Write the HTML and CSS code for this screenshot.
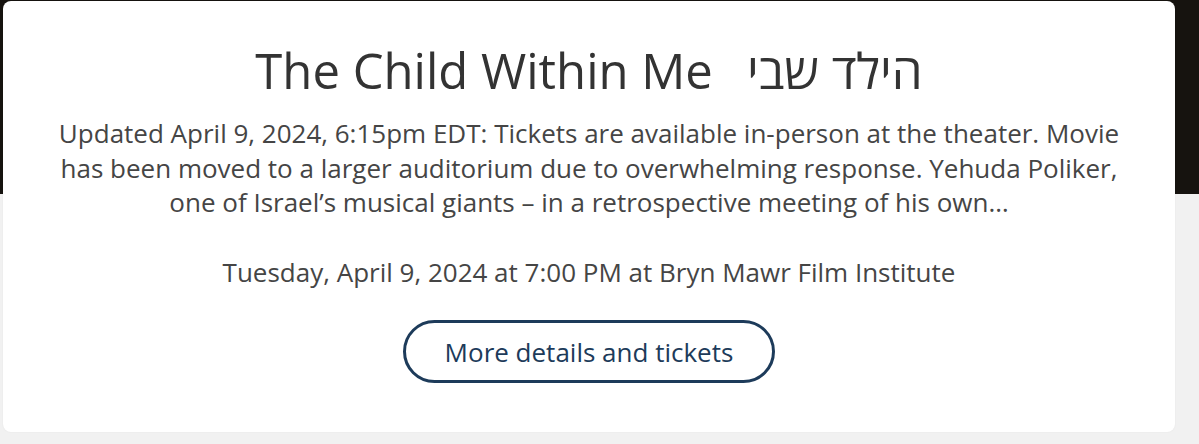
FILE: index.html
```html
<!DOCTYPE html>
<html lang="en">
<head>
<meta charset="utf-8">
<title>The Child Within Me</title>
<link rel="stylesheet" href="styles.css">
</head>
<body>
<div class="page">
  <div class="card">
    <h1 class="title">The Child Within Me<span class="title-he" lang="he" dir="rtl">הילד שבי</span></h1>
    <p class="desc">Updated April 9, 2024, 6:15pm EDT: Tickets are available in-person at the theater. Movie has been moved to a larger auditorium due to overwhelming response. Yehuda Poliker, one of Israel’s musical giants – in a retrospective meeting of his own…</p>
    <p class="when">Tuesday, April 9, 2024 at 7:00 PM at Bryn Mawr Film Institute</p>
    <a class="btn" href="#">More details and tickets</a>
  </div>
</div>
</body>
</html>
```
FILE: styles.css
```css
html, body {
  margin: 0;
  padding: 0;
}
body {
  font-family: "Open Sans", "Noto Sans", "DejaVu Sans", sans-serif;
  background: #f1f1f1;
}
.page {
  width: 1199px;
  height: 444px;
  overflow: hidden;
  background: linear-gradient(to bottom, #16130f 0, #16130f 194px, #f1f1f1 194px, #f1f1f1 100%);
  padding-top: 1px;
  box-sizing: border-box;
}
.card {
  margin: 0 24px 0 3px;
  height: 431px;
  box-sizing: border-box;
  background: #ffffff;
  border-radius: 8px;
  box-shadow: 0 0 2px rgba(0,0,0,0.06);
  display: flex;
  flex-direction: column;
  align-items: center;
  text-align: center;
  padding: 40px 30px 0;
}
.title {
  margin: 0;
  font-weight: 400;
  font-size: 49px;
  line-height: 58px;
  color: #333333;
}
.title-he {
  margin-left: 34px;
}
.desc {
  margin: 17px 0 0;
  font-size: 26px;
  line-height: 34.5px;
  color: #454545;
  max-width: 1090px;
}
.when {
  margin: 35px 0 0;
  font-size: 26px;
  line-height: 34.5px;
  color: #454545;
}
.btn {
  margin-top: 31px;
  display: flex;
  align-items: center;
  justify-content: center;
  width: 372px;
  height: 63px;
  box-sizing: border-box;
  border: 3px solid #1d3b5a;
  border-radius: 32px;
  color: #1d3b5a;
  font-size: 26px;
  text-decoration: none;
}
```
